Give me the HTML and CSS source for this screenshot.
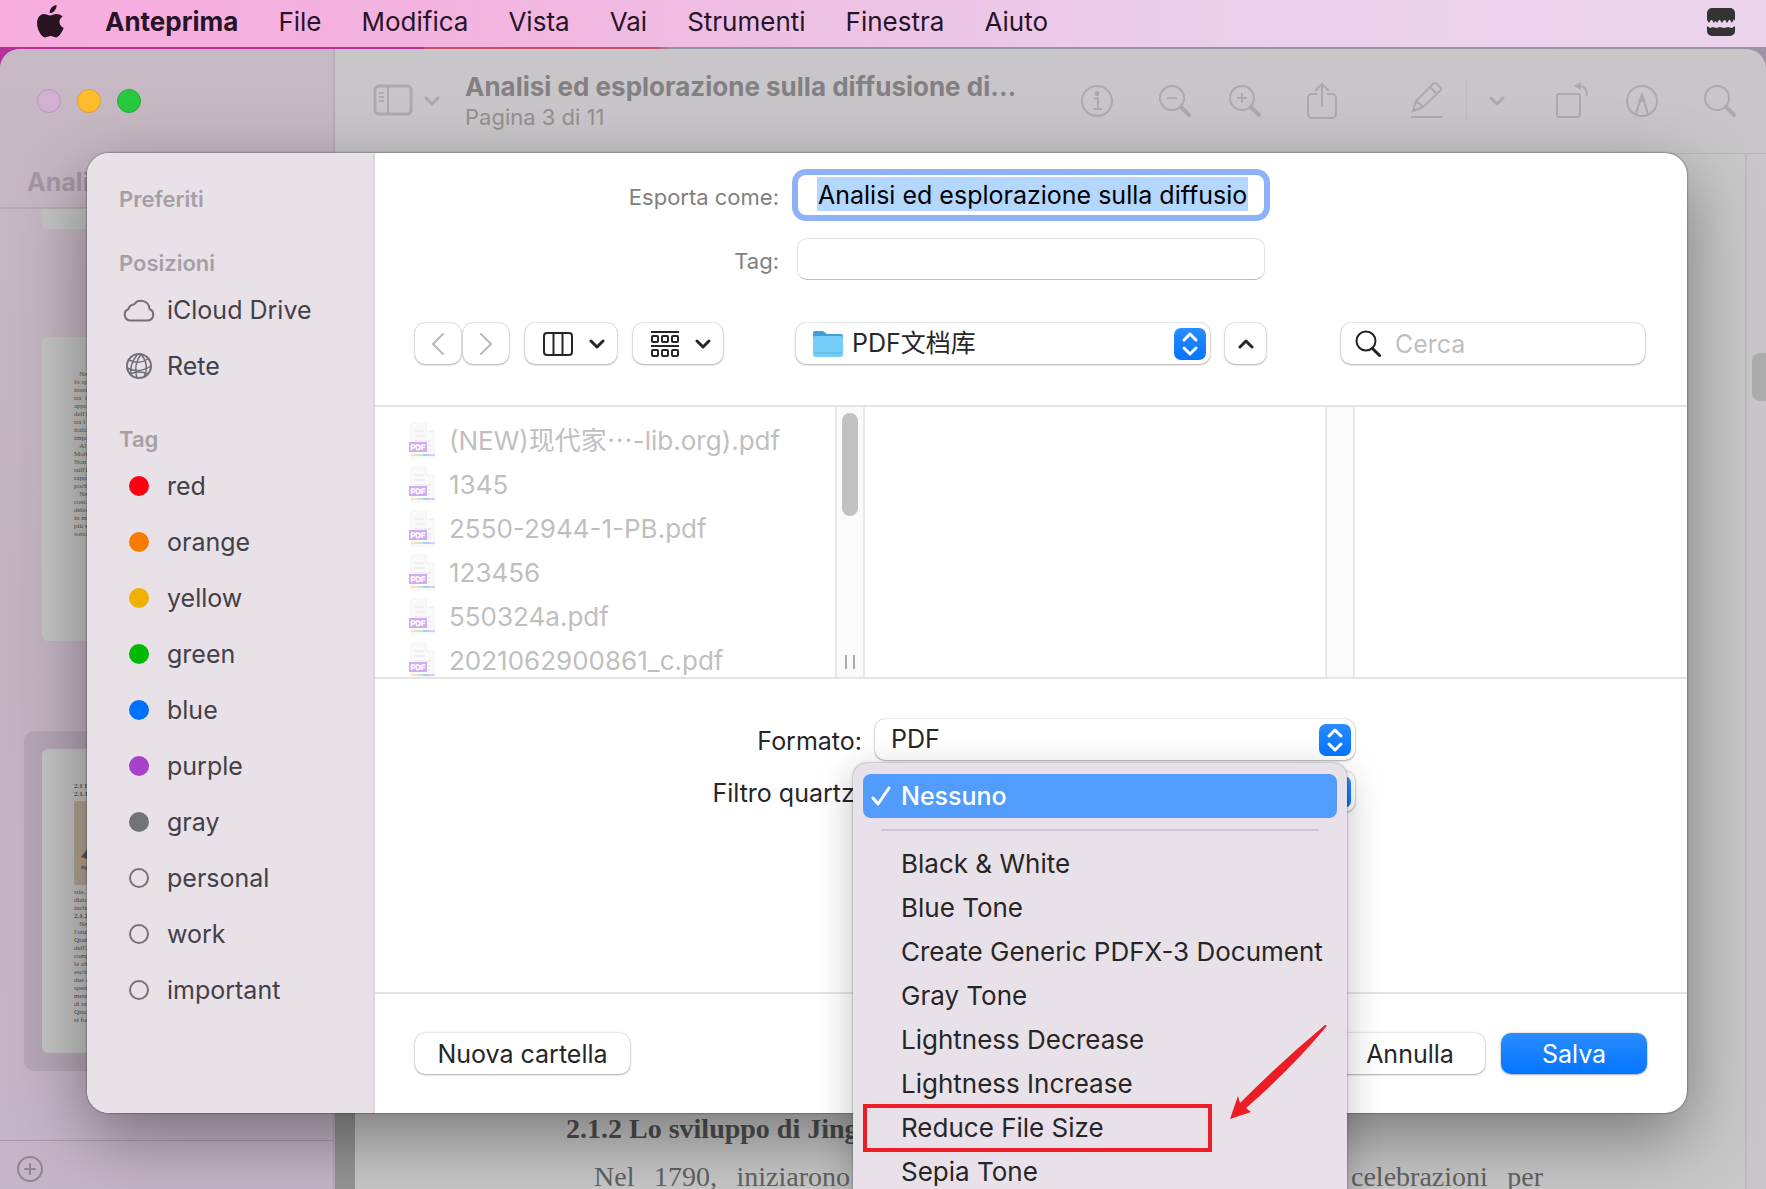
FILE: index.html
```html
<!DOCTYPE html>
<html lang="it">
<head>
    <meta charset="UTF-8">
    <meta name="viewport" content="width=device-width, initial-scale=1.0">
    <title>Anteprima</title>
    <link rel="stylesheet" href="styles.css">
</head>
<body>
    <!-- shared icons -->
    <svg class="sprite" aria-hidden="true">
        <symbol id="pdf-icon" viewBox="0 0 28 38">
            <path d="M3 1h15l8 8v27H3z" fill="#fafafa" stroke="#f4f4f4"/>
            <path d="M18 1v8h8" fill="#fff" stroke="#ededed"/>
            <path d="M7 9h9M7 14h10M7 19h16M18 24h5M18 28h5" stroke="#efefef" stroke-width="2"/>
            <rect x="1" y="20" width="18" height="10" fill="#cfabef"/>
            <path d="M3.500 28v-5h2a1.500 1.500 0 0 1 0 3h-2M8.500 23v4.500h1.500a2 2 0 0 0 0-4.500zM14 28v-5h3.500M14 25.500h3" fill="none" stroke="#fff" stroke-width="1.500"/>
            <path d="M3 33h6" stroke="#ffdfb8" stroke-width="2"/>
            <path d="M9 33h6" stroke="#b9efcf" stroke-width="2"/>
            <path d="M15 33h6" stroke="#acd0ef" stroke-width="2"/>
            <path d="M21 33h6" stroke="#e5c8fa" stroke-width="2"/>
        </symbol>
        <symbol id="chevron" viewBox="0 0 16 12">
            <path d="M2 3l6 6 6-6" fill="none" stroke="currentColor" stroke-width="3" stroke-linecap="round" stroke-linejoin="round"/>
        </symbol>
        <symbol id="stepper" viewBox="0 0 32 32">
            <path d="M10 12l6-6 6 6M10 20l6 6 6-6" fill="none" stroke="#fff" stroke-width="3" stroke-linecap="round" stroke-linejoin="round"/>
        </symbol>
    </svg>

    <nav class="menubar">
        <a href="#" class="apple" aria-label="Apple">
            <svg width="28" height="34" viewBox="0 0 28 34" fill="#281420"><path d="M19.500 0c.3 2.200-.6 4.200-1.900 5.700-1.300 1.500-3 2.500-4.900 2.400-.2-2.100.7-4.200 1.900-5.600C15.900 1.100 17.900.1 19.500 0zM25.700 11.600c-2 1.200-3.200 3-3.200 5.300 0 2.700 1.600 4.900 4.200 5.900-.6 1.900-1.500 3.700-2.600 5.300-1.500 2.300-3 4.300-5.300 4.300-2.100 0-2.800-1.300-5.200-1.300-2.500 0-3.300 1.300-5.300 1.300-2.300 0-3.900-2.200-5.400-4.500C.9 24.700-.2 20.700.1 17c.4-5 3.500-8 7-8 2.300 0 4 1.500 6 1.500 1.900 0 3.400-1.600 6.300-1.600 2.500 0 4.800 1 6.300 2.700z"/></svg>
        </a>
        <a href="#" class="app-name">Anteprima</a>
        <a href="#">File</a>
        <a href="#">Modifica</a>
        <a href="#">Vista</a>
        <a href="#">Vai</a>
        <a href="#">Strumenti</a>
        <a href="#">Finestra</a>
        <a href="#">Aiuto</a>
        <svg class="tray-icon" width="28" height="28" viewBox="0 0 28 28"><path d="M0 5a5 5 0 0 1 5-5h18a5 5 0 0 1 5 5v8l-1-2-2 4-2-3h-1l-2 3-2-3h-1l-2 3-2-3h-1l-2 3-2-3H9l-2 3-2-3H4l-2 3-2-3zM0 18l3 2 3-1 3 1 4-1 4 1 4-1 4 1 3-2v5a5 5 0 0 1-5 5H5a5 5 0 0 1-5-5z" fill="#333"/></svg>
    </nav>

    <div class="window">
        <aside class="thumbs">
            <div class="lights">
                <span class="light close"></span>
                <span class="light minimize"></span>
                <span class="light zoom"></span>
            </div>
            <div class="doc-name">Anali</div>
            <div class="page-list">
                <div class="thumb cut"></div>
                <div class="thumb">
                    <p>&nbsp;&nbsp;&nbsp;Nella<br>lo spett<br>inserita<br>tra &nbsp;il<br>appross<br>dell'att<br>tra i do<br>italiana<br>import<br>&nbsp;&nbsp;&nbsp;Al m<br>Molti n<br>Non ci<br>sull'int<br>rapport<br>pochi n<br>&nbsp;&nbsp;&nbsp;Nell'<br>così. Il<br>delequ<br>in mod<br>più sog<br>sotto di</p>
                </div>
                <div class="thumb-selected">
                    <div class="thumb">
                        <p><b>2.1 La</b><br><b>2.1.1 L</b></p>
                        <svg class="figure" width="120" height="84" viewBox="0 0 120 84"><path d="M0 0h120v84H0z" fill="#b3a794"/><path d="M0 66l8-14 8 12-8 6z" fill="#bda58c"/><path d="M7 56l14-18v14l-8 6z" fill="#5d5960"/><path d="M7 66l14 3" stroke="#77777c" stroke-width="3"/></svg>
                        <p>stie, m<br>dialogh<br>inclusa<br><b>2.1.2 L</b><br>&nbsp;&nbsp;&nbsp;Nel<br>l'otund<br>Qianlo<br>dell'An<br>comple<br>le altre<br>esclusi<br>due ope<br>spettac<br>mentre<br>di recit<br>Qinqin<br>si form</p>
                    </div>
                </div>
            </div>
            <div class="thumbs-footer">
                <button class="add" aria-label="Aggiungi">
                    <svg width="26" height="26" viewBox="0 0 26 26" fill="none" stroke="currentColor" stroke-width="2" stroke-linecap="round"><circle cx="13" cy="13" r="12"/><path d="M13 8v10M8 13h10"/></svg>
                </button>
            </div>
        </aside>

        <main class="document">
            <header class="toolbar">
                <svg width="40" height="34" viewBox="0 0 40 34" fill="none" stroke="currentColor" stroke-width="3"><rect x="2" y="2" width="36" height="28" rx="4"/><path d="M15 2v28" stroke-width="2"/><path d="M6 9h5M6 13h5M6 17h5" stroke-width="2"/></svg>
                <svg class="side-chevron" width="16" height="12"><use href="#chevron"/></svg>
                <div class="doc-title">
                    <strong>Analisi ed esplorazione sulla diffusione di…</strong>
                    <span>Pagina 3 di 11</span>
                </div>
                <div class="tools">
                    <svg width="34" height="34" viewBox="0 0 34 34" fill="none" stroke="currentColor" stroke-width="2"><circle cx="17" cy="17" r="15"/><path d="M13.500 14.500H18V25M13 25h9"/><circle cx="17" cy="9.500" r="1.500" fill="currentColor"/></svg>
                    <div class="tool-group">
                        <svg width="34" height="34" viewBox="0 0 34 34" fill="none" stroke="currentColor" stroke-width="2"><circle cx="14" cy="14" r="12"/><path d="M9 14h10"/><path d="M23 23l8 8" stroke-width="4" stroke-linecap="round"/></svg>
                        <svg width="34" height="34" viewBox="0 0 34 34" fill="none" stroke="currentColor" stroke-width="2"><circle cx="14" cy="14" r="12"/><path d="M9 14h10M14 9v10"/><path d="M23 23l8 8" stroke-width="4" stroke-linecap="round"/></svg>
                    </div>
                    <svg width="32" height="38" viewBox="0 0 32 38" fill="none" stroke="currentColor" stroke-width="2"><path d="M11 12H6a4 4 0 0 0-4 4v16a4 4 0 0 0 4 4h20a4 4 0 0 0 4-4V16a4 4 0 0 0-4-4h-5M16 25V2M9 9l7-7 7 7"/></svg>
                    <div class="tool-group markup">
                        <svg width="34" height="38" viewBox="0 0 34 38" fill="none" stroke="currentColor" stroke-width="2"><path d="M1 35h32M3 29l3-10L23 2q2-2 4 0l3 3q2 2 0 4L13 25zM6 19l7 6M20 5l7 7M3 29l5-2"/></svg>
                        <svg width="1" height="40"><path d="M0 0h1v40H0z" fill="#bfbdbf"/></svg>
                        <svg width="16" height="12"><use href="#chevron"/></svg>
                    </div>
                    <div class="tool-group">
                        <svg width="34" height="38" viewBox="0 0 34 38" fill="none" stroke="currentColor" stroke-width="2"><rect x="2" y="12" width="23" height="23" rx="2"/><path d="M24 4q8 0 8 10"/><path d="M26 0v8l-7-4z" fill="currentColor" stroke="none"/></svg>
                        <svg width="34" height="34" viewBox="0 0 34 34" fill="none" stroke="currentColor" stroke-width="2"><circle cx="17" cy="17" r="15"/><path d="M11 30l4-13h4l4 13"/><path d="M17 8l4 10h-8z" fill="currentColor" stroke="none"/></svg>
                    </div>
                    <svg width="34" height="34" viewBox="0 0 34 34" fill="none" stroke="currentColor" stroke-width="2"><circle cx="14" cy="14" r="12"/><path d="M23 23l8 8" stroke-width="4" stroke-linecap="round"/></svg>
                </div>
            </header>
            <div class="doc-area">
                <article class="page">
                    <h2>2.1.2 Lo sviluppo di Jing</h2>
                    <p><span class="line-start">Nel 1790, iniziarono</span><span class="line-end">celebrazioni per</span></p>
                </article>
                <div class="scroll-track"><div class="scroll-thumb"></div></div>
            </div>
        </main>

        <form class="dialog">
            <aside class="places">
                <h3>Preferiti</h3>
                <h3>Posizioni</h3>
                <a href="#">
                    <svg width="32" height="26" viewBox="0 0 32 26" fill="none" stroke="currentColor" stroke-width="2"><path d="M7 23.500A6 6 0 0 1 5.500 12 6 6 0 0 1 11 7.500a8.500 8.500 0 0 1 15.500 4.500A6 6 0 0 1 25 23.500z" stroke-linejoin="round"/></svg>
                    iCloud Drive
                </a>
                <a href="#">
                    <svg width="32" height="28" viewBox="0 0 32 28" fill="none" stroke="currentColor" stroke-width="2"><circle cx="16" cy="14" r="12"/><path d="M18 2q-8 11-4 24M18 2q9 11 3 23M14 3q-8 10-6 20M6 8q10 5 19-1M4 16q12 6 24-2M7 22q9-4 18 0" stroke-width="1.500"/></svg>
                    Rete
                </a>
                <h3 class="tag-title">Tag</h3>
                <a href="#"><span class="dot red"></span>red</a>
                <a href="#"><span class="dot orange"></span>orange</a>
                <a href="#"><span class="dot yellow"></span>yellow</a>
                <a href="#"><span class="dot green"></span>green</a>
                <a href="#"><span class="dot blue"></span>blue</a>
                <a href="#"><span class="dot purple"></span>purple</a>
                <a href="#"><span class="dot gray"></span>gray</a>
                <a href="#"><span class="dot"></span>personal</a>
                <a href="#"><span class="dot"></span>work</a>
                <a href="#"><span class="dot"></span>important</a>
            </aside>

            <section class="export">
                <div class="fields">
                    <label for="name">Esporta come:</label>
                    <div class="name-box"><input id="name" class="name-input" type="text" value="Analisi ed esplorazione sulla diffusione"></div>
                    <label for="tags">Tag:</label>
                    <input id="tags" class="tag-input" type="text">
                </div>

                <div class="browse-bar">
                    <button type="button" class="btn nav" aria-label="Indietro"><svg width="14" height="24" viewBox="0 0 14 24"><path d="M12 2L2 12l10 10" fill="none" stroke="#b9b9b9" stroke-width="2" stroke-linecap="round"/></svg></button>
                    <button type="button" class="btn nav" aria-label="Avanti"><svg width="14" height="24" viewBox="0 0 14 24"><path d="M2 2l10 10L2 22" fill="none" stroke="#b9b9b9" stroke-width="2" stroke-linecap="round"/></svg></button>
                    <button type="button" class="btn view" aria-label="Vista a colonne">
                        <svg width="30" height="24" viewBox="0 0 30 24" fill="none" stroke="currentColor" stroke-width="2"><rect x="1" y="1" width="28" height="22" rx="3"/><path d="M10.500 1v22M19.500 1v22"/></svg>
                        <svg width="16" height="12"><use href="#chevron"/></svg>
                    </button>
                    <button type="button" class="btn group" aria-label="Raggruppa">
                        <svg width="28" height="28" viewBox="0 0 28 28" fill="none" stroke="currentColor" stroke-width="2"><path d="M0 2h28M0 16h28"/><rect x="1" y="6" width="6" height="6" rx="1"/><rect x="11" y="6" width="6" height="6" rx="1"/><rect x="21" y="6" width="6" height="6" rx="1"/><rect x="1" y="20" width="6" height="6" rx="1"/><rect x="11" y="20" width="6" height="6" rx="1"/><rect x="21" y="20" width="6" height="6" rx="1"/></svg>
                        <svg width="16" height="12"><use href="#chevron"/></svg>
                    </button>
                    <div class="popup folder">
                        <svg class="folder-icon" width="30" height="28" viewBox="0 0 30 28"><path d="M0 3q0-2 2-2h8l4 3h14q2 0 2 2v19H0z" fill="#3f9fd8"/><path d="M0 8q0-2 2-2h26q2 0 2 2v16q0 3-2 3H2q-2 0-2-3z" fill="#76cdfa"/><path d="M1 23h28" stroke="#52b1e4"/></svg>
                        <select aria-label="Cartella"><option>PDF文档库</option></select>
                        <svg class="stepper" width="32" height="32"><use href="#stepper"/></svg>
                    </div>
                    <button type="button" class="btn up" aria-label="Riduci"><svg class="flip" width="16" height="12"><use href="#chevron"/></svg></button>
                    <div class="search">
                        <svg width="26" height="28" viewBox="0 0 26 28" fill="none" stroke="#222" stroke-width="2"><circle cx="11" cy="11" r="9.500"/><path d="M17.500 18.500l7 7" stroke-width="3" stroke-linecap="round"/></svg>
                        <input type="search" placeholder="Cerca" aria-label="Cerca">
                    </div>
                </div>

                <div class="columns">
                    <ul class="files">
                        <li><svg width="28" height="38"><use href="#pdf-icon"/></svg>(NEW)现代家⋯-lib.org).pdf</li>
                        <li><svg width="28" height="38"><use href="#pdf-icon"/></svg>1345</li>
                        <li><svg width="28" height="38"><use href="#pdf-icon"/></svg>2550-2944-1-PB.pdf</li>
                        <li><svg width="28" height="38"><use href="#pdf-icon"/></svg>123456</li>
                        <li><svg width="28" height="38"><use href="#pdf-icon"/></svg>550324a.pdf</li>
                        <li><svg width="28" height="38"><use href="#pdf-icon"/></svg>2021062900861_c.pdf</li>
                    </ul>
                    <div class="col-scroll">
                        <div class="col-thumb"></div>
                        <div class="col-grip"></div>
                    </div>
                    <div class="col-empty"></div>
                    <div class="col-scroll"></div>
                </div>

                <div class="options">
                    <label for="format">Formato:</label>
                    <div class="popup">
                        <select id="format"><option>PDF</option></select>
                        <svg class="stepper" width="32" height="32"><use href="#stepper"/></svg>
                    </div>
                    <label for="filter">Filtro quartz:</label>
                    <div class="popup">
                        <select id="filter"><option></option></select>
                        <svg class="stepper" width="32" height="32"><use href="#stepper"/></svg>
                        <div class="filter-menu" role="menu">
                            <button type="button" class="active" role="menuitem"><svg width="20" height="22" viewBox="0 0 20 22"><path d="M2 13l5 6L18 3" fill="none" stroke="#fff" stroke-width="3" stroke-linecap="round" stroke-linejoin="round"/></svg>Nessuno</button>
                            <hr>
                            <button type="button" role="menuitem">Black &amp; White</button>
                            <button type="button" role="menuitem">Blue Tone</button>
                            <button type="button" role="menuitem">Create Generic PDFX-3 Document</button>
                            <button type="button" role="menuitem">Gray Tone</button>
                            <button type="button" role="menuitem">Lightness Decrease</button>
                            <button type="button" role="menuitem">Lightness Increase</button>
                            <button type="button" role="menuitem" class="marked">Reduce File Size</button>
                            <button type="button" role="menuitem">Sepia Tone</button>
                            <svg class="arrow" width="100" height="98" viewBox="0 0 100 98"><path d="M98 1q1 1 0 2Q62 46 18 84l5 4-21 7 8-23 2 7Q55 36 97 1z" fill="#ee1c25"/></svg>
                        </div>
                    </div>
                </div>

                <footer class="actions">
                    <button type="button" class="btn new-folder">Nuova cartella</button>
                    <button type="button" class="btn cancel">Annulla</button>
                    <button type="button" class="btn save">Salva</button>
                </footer>
            </section>
        </form>
    </div>
</body>
</html>
```
FILE: styles.css
```css
* {
    margin: 0;
    padding: 0;
    box-sizing: border-box;
}

body {
    font-family: Inter, "Noto Sans CJK SC", sans-serif;
    font-size: 25px;
    line-height: 32px;
    color: #262626;
    height: 100vh;
    display: flex;
    flex-direction: column;
    overflow: hidden;
    background: linear-gradient(90deg, #b5309b 24%, #c5506c 24%, #c5506c 37%, #8f93ab 38%, #9d93a5);
}

a {
    color: inherit;
    text-decoration: none;
}

svg {
    flex-shrink: 0;
}

button,
input,
select {
    font: inherit;
    color: inherit;
    border: none;
    outline: none;
    background: none;
    appearance: none;
}

.sprite {
    position: absolute;
    width: 0;
    height: 0;
}

/* menu bar */
.menubar {
    height: 47px;
    flex-shrink: 0;
    display: flex;
    align-items: center;
    gap: 40px;
    padding: 0 31px 3px 37px;
    font-size: 26px;
    color: #281428;
    background: linear-gradient(90deg, #f7addf, #f3b3df 25%, #eec0e4 45%, #ead0ea 70%, #ecd3ec);
}

.apple svg {
    display: block;
}

.app-name {
    font-weight: 700;
}

.tray-icon {
    margin-left: auto;
}

/* preview window */
.window {
    flex: 1;
    min-height: 0;
    margin-top: 2px;
    display: flex;
    position: relative;
    border-radius: 20px 20px 0 0;
    background: #c8c6c8;
}

.thumbs {
    width: 335px;
    flex-shrink: 0;
    display: flex;
    flex-direction: column;
    border-right: 2px solid #b5adb5;
    border-radius: 20px 0 0 0;
    background: linear-gradient(180deg, #c6b9c4, #c3b3c1 50%, #c5b5c8);
}

.lights {
    display: flex;
    gap: 16px;
    padding: 40px 0 0 37px;
}

.light {
    width: 24px;
    height: 24px;
    border-radius: 50%;
    background: #d1b0d1;
    border: 1px solid #b698b6;
}

.light.minimize {
    background: #ffbd2e;
    border-color: #dea02e;
}

.light.zoom {
    background: #28c840;
    border-color: #25ac38;
}

.doc-name {
    padding: 53px 27px 9px;
    font-weight: 700;
    color: #a497a3;
    border-bottom: 2px solid #b7aab6;
}

.page-list {
    flex: 1;
    min-height: 0;
    overflow: hidden;
}

.thumb {
    height: 304px;
    margin: 108px 42px 90px;
    padding: 33px 32px;
    border-radius: 6px;
    font-family: "Liberation Serif", serif;
    font-size: 7px;
    line-height: 8px;
    color: #555;
    background: #c4c4c4;
}

.thumb.cut {
    height: 20px;
    margin: 0 42px;
    padding: 0;
    border-radius: 0 0 6px 6px;
}

.thumb-selected {
    margin: 0 24px;
    padding: 18px;
    border-radius: 10px;
    background: #b5a6b5;
}

.thumb-selected .thumb {
    margin: 0;
}

.figure {
    display: block;
    margin: 3px 0;
}

.thumbs-footer {
    height: 49px;
    padding: 15px 17px;
    border-top: 1px solid #a999a8;
}

.add {
    color: #91868f;
}

.add svg {
    display: block;
}

.document {
    flex: 1;
    min-width: 0;
    display: flex;
    flex-direction: column;
}

.toolbar {
    height: 105px;
    flex-shrink: 0;
    display: flex;
    align-items: center;
    padding: 0 29px 0 38px;
    color: #acaaac;
    border-bottom: 1px solid #b9b7b9;
}

.side-chevron {
    margin-left: 11px;
}

.doc-title {
    margin-left: 25px;
    color: #828082;
    white-space: nowrap;
}

.doc-title strong {
    display: block;
    font-size: 26px;
}

.doc-title span {
    display: block;
    font-size: 22px;
    line-height: 28px;
    color: #929092;
}

.tools {
    flex: 1;
    display: flex;
    align-items: center;
    justify-content: flex-end;
    gap: 44px;
}

.tool-group {
    display: flex;
    align-items: center;
    gap: 36px;
}

.tool-group.markup {
    gap: 22px;
    margin: 0 6px 0 28px;
}

.doc-area {
    flex: 1;
    display: flex;
    padding-left: 20px;
    background: linear-gradient(90deg, #959595 20px, transparent 20px);
}

.page {
    flex: 1;
    display: flex;
    flex-direction: column;
    justify-content: flex-end;
    padding: 0 202px 0 211px;
    font-family: "Liberation Serif", serif;
    font-size: 28px;
    color: #626262;
    background: #c8c8c8;
}

.page h2 {
    font-size: 28px;
    color: #505050;
}

.page p {
    display: flex;
    justify-content: space-between;
    padding-left: 28px;
    height: 44px;
    line-height: 64px;
    white-space: nowrap;
}

.line-start,
.line-end {
    width: 256px;
    text-align-last: justify;
}

.line-end {
    width: 192px;
}

.scroll-track {
    width: 21px;
    border-left: 2px solid #bababa;
    padding: 199px 0 0 5px;
}

.scroll-thumb {
    height: 48px;
    border-radius: 8px 0 0 8px;
    background: #adadad;
}

/* save dialog */
.dialog {
    position: absolute;
    top: 104px;
    left: 87px;
    right: 79px;
    display: flex;
    border-radius: 22px;
    background: #fff;
    box-shadow: 0 0 2px rgba(0, 0, 0, 0.7), 0 24px 70px rgba(0, 0, 0, 0.4);
}

.places {
    width: 288px;
    padding: 30px 32px 95px;
    border-right: 2px solid #dcd6dc;
    border-radius: 22px 0 0 22px;
    background: #e8e1e8;
}

.places h3 {
    font-size: 22px;
    font-weight: 600;
    color: #a5a0a6;
    margin-bottom: 32px;
}

.places h3 + a {
    margin-top: -29px;
}

.places .tag-title {
    margin: 29px 0 32px;
}

.places a {
    height: 56px;
    display: flex;
    align-items: center;
    gap: 12px;
    padding-left: 4px;
    color: #434047;
}

.places a svg {
    color: #707075;
}

.dot {
    width: 20px;
    height: 20px;
    margin: 0 6px;
    border-radius: 50%;
    border: 2px solid #727277;
}

.dot.red {
    background: #ff0010;
    border: none;
}

.dot.orange {
    background: #f77b00;
    border: none;
}

.dot.yellow {
    background: #eeb100;
    border: none;
}

.dot.green {
    background: #00b905;
    border: none;
}

.dot.blue {
    background: #0071ff;
    border: none;
}

.dot.purple {
    background: #a742cb;
    border: none;
}

.dot.gray {
    background: #727277;
    border: none;
}

.export {
    flex: 1;
    min-width: 0;
    display: flex;
    flex-direction: column;
}

.fields {
    display: grid;
    grid-template-columns: 404px 468px;
    column-gap: 18px;
    row-gap: 23px;
    align-items: center;
    padding-top: 22px;
}

.fields label {
    padding-top: 3px;
    font-size: 22px;
    text-align: right;
    color: #808080;
}

.name-box {
    height: 40px;
    margin: 0 1px;
    padding: 2px 16px 2px 19px;
    border-radius: 8px;
    background: #fff;
    box-shadow: 0 0 0 6px #8eb1fa;
}

.name-input {
    display: block;
    width: 100%;
    height: 34px;
    padding: 2px 0 0 1px;
    color: #000;
    background: #b3d7ff;
}

.tag-input {
    height: 42px;
    border-radius: 10px;
    border: 1px solid #e2e2e2;
    border-bottom-color: #bbb;
}

.btn,
.popup,
.search {
    height: 41px;
    border-radius: 10px;
    background: #fff;
    box-shadow: 0 0 2px rgba(0, 0, 0, 0.3), 0 1px 2px rgba(0, 0, 0, 0.25);
}

.btn {
    display: flex;
    align-items: center;
    justify-content: center;
}

.browse-bar {
    display: flex;
    align-items: center;
    padding: 43px 42px 41px 40px;
}

.nav {
    width: 46px;
    margin-right: 2px;
}

.view {
    width: 92px;
    margin-left: 14px;
    gap: 16px;
    padding-left: 6px;
}

.group {
    width: 90px;
    margin-left: 16px;
    gap: 16px;
    padding-left: 5px;
}

.flip {
    transform: rotate(180deg);
}

.popup {
    position: relative;
    display: flex;
    align-items: center;
    padding-right: 4px;
}

.popup select {
    flex: 1;
    min-width: 0;
    height: 40px;
    padding: 0 0 2px 16px;
}

.stepper {
    border-radius: 7px;
    background: linear-gradient(#2a8cff, #0375ff);
}

.folder {
    width: 414px;
    margin-left: 73px;
}

.folder-icon {
    margin-left: 17px;
}

.folder select {
    padding-left: 9px;
}

.up {
    width: 41px;
    margin-left: 15px;
}

.search {
    width: 304px;
    margin-left: auto;
    display: flex;
    align-items: center;
    gap: 14px;
    padding: 0 14px;
}

.search input {
    width: 100%;
    min-width: 0;
}

.search input::placeholder {
    color: #bfbfbf;
}

.columns {
    height: 274px;
    display: flex;
    border-top: 2px solid #e4e4e4;
    border-bottom: 2px solid #e4e4e4;
}

.files {
    width: 460px;
    padding-top: 12px;
    list-style: none;
    font-size: 26px;
    color: #bfbfbf;
    overflow: hidden;
}

.files li {
    height: 44px;
    display: flex;
    align-items: center;
    gap: 13px;
    padding-left: 33px;
    white-space: nowrap;
}

.col-scroll {
    width: 30px;
    display: flex;
    flex-direction: column;
    align-items: center;
    justify-content: space-between;
    padding: 6px 0 8px;
    border-left: 2px solid #e8e8e8;
    border-right: 2px solid #e8e8e8;
    background: #fafafa;
}

.col-thumb {
    width: 16px;
    height: 103px;
    border-radius: 8px;
    background: #c1c1c1;
}

.col-grip {
    width: 10px;
    height: 14px;
    border-left: 2px solid #aaa;
    border-right: 2px solid #aaa;
}

.col-empty {
    width: 460px;
}

.options {
    display: grid;
    grid-template-columns: 487px 480px;
    column-gap: 13px;
    row-gap: 11px;
    align-items: center;
    align-content: start;
    padding-top: 40px;
    height: 313px;
}

.options label {
    padding-top: 2px;
    text-align: right;
}

/* open pop-up menu of the quartz filter */
.filter-menu {
    position: absolute;
    z-index: 1;
    top: -8px;
    left: -22px;
    width: 494px;
    height: 450px;
    padding: 11px 10px;
    border-radius: 14px 14px 0 0;
    font-size: 26px;
    background: #e8e1e9;
    box-shadow: 0 0 2px rgba(0, 0, 0, 0.5), 0 10px 36px rgba(0, 0, 0, 0.25);
}

.filter-menu button {
    display: flex;
    align-items: center;
    width: 100%;
    height: 44px;
    padding-left: 38px;
}

.filter-menu .active {
    gap: 10px;
    padding-left: 8px;
    border-radius: 8px;
    font-size: 25px;
    font-weight: 500;
    color: #fff;
    background: #529bff;
}

.filter-menu hr {
    margin: 11px 18px;
    border: none;
    border-top: 2px solid #cdc6cf;
}

.filter-menu .marked {
    width: 349px;
    height: 48px;
    margin: -2px 0;
    padding-left: 34px;
    border: 4px solid #ee1c25;
}

.arrow {
    position: absolute;
    top: 261px;
    right: 19px;
}

.actions {
    display: flex;
    padding: 39px 40px;
    border-top: 2px solid #e4e4e4;
}

.new-folder {
    width: 215px;
    margin-right: auto;
}

.cancel {
    width: 150px;
}

.save {
    width: 146px;
    margin-left: 16px;
    color: #fff;
    background: linear-gradient(#2a8cff, #0375ff);
}
```
